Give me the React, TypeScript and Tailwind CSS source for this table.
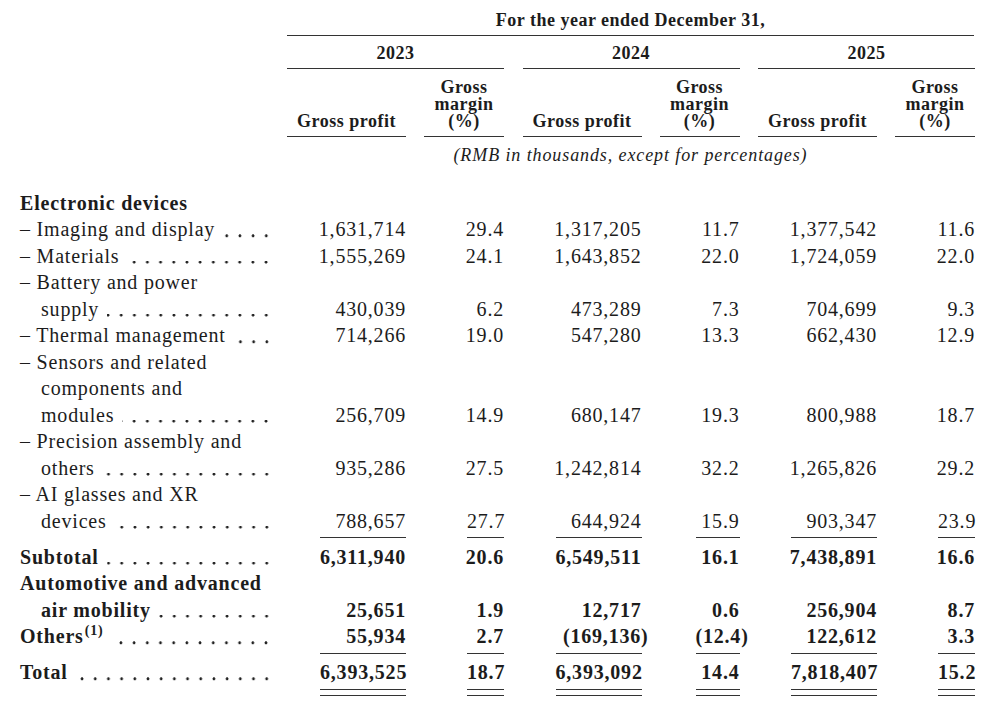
import React from "react";

type Row = {
  label: string;
  dash?: boolean;
  indent?: boolean;
  bold?: boolean;
  dots?: boolean;
  sup?: string;
  values?: string[];
  rule?: "single" | "double";
};

const rows: Row[] = [
  { label: "Electronic devices", bold: true },
  { label: "Imaging and display", dash: true, dots: true, values: ["1,631,714", "29.4", "1,317,205", "11.7", "1,377,542", "11.6"] },
  { label: "Materials", dash: true, dots: true, values: ["1,555,269", "24.1", "1,643,852", "22.0", "1,724,059", "22.0"] },
  { label: "Battery and power", dash: true },
  { label: "supply", indent: true, dots: true, values: ["430,039", "6.2", "473,289", "7.3", "704,699", "9.3"] },
  { label: "Thermal management", dash: true, dots: true, values: ["714,266", "19.0", "547,280", "13.3", "662,430", "12.9"] },
  { label: "Sensors and related", dash: true },
  { label: "components and", indent: true },
  { label: "modules", indent: true, dots: true, values: ["256,709", "14.9", "680,147", "19.3", "800,988", "18.7"] },
  { label: "Precision assembly and", dash: true },
  { label: "others", indent: true, dots: true, values: ["935,286", "27.5", "1,242,814", "32.2", "1,265,826", "29.2"] },
  { label: "AI glasses and XR", dash: true },
  { label: "devices", indent: true, dots: true, rule: "single", values: ["788,657", "27.7", "644,924", "15.9", "903,347", "23.9"] },
  { label: "Subtotal", bold: true, dots: true, values: ["6,311,940", "20.6", "6,549,511", "16.1", "7,438,891", "16.6"] },
  { label: "Automotive and advanced", bold: true },
  { label: "air mobility", bold: true, indent: true, dots: true, values: ["25,651", "1.9", "12,717", "0.6", "256,904", "8.7"] },
  { label: "Others", sup: "(1)", bold: true, dots: true, rule: "single", values: ["55,934", "2.7", "(169,136)", "(12.4)", "122,612", "3.3"] },
  { label: "Total", bold: true, dots: true, rule: "double", values: ["6,393,525", "18.7", "6,393,092", "14.4", "7,818,407", "15.2"] },
];

// underline widths per value column
const ruleWidths = ["w-[86px]", "w-[37px]", "w-[86px]", "w-[44px]", "w-[86px]", "w-[37px]"];
const colWidths = ["w-[119px]", "w-[80px] ml-[18px]", "w-[119px] ml-[18.5px]", "w-[80px] ml-[18px]", "w-[119px] ml-[18.5px]", "w-[80px] ml-[18px]"];

function Value({ text }: { text: string }) {
  if (text.startsWith("(")) return <span className="-mr-[7px]">{text}</span>;
  return <span>{text}</span>;
}

function Cell({ text, idx, rule }: { text: string; idx: number; rule?: "single" | "double" }) {
  const inner = <Value text={text} />;
  let body: React.ReactNode = inner;
  if (rule === "single") {
    body = <div className={`${ruleWidths[idx]} text-right border-b-[1.5px] border-[#333] pb-[3px]`}>{inner}</div>;
  } else if (rule === "double") {
    body = (
      <div className={`${ruleWidths[idx]} border-b-[1.5px] border-[#333]`}>
        <div className="text-right border-b-[1.5px] border-[#333] pb-[3px] mb-[5px]">{inner}</div>
      </div>
    );
  }
  return <div className={`${colWidths[idx]} flex justify-end text-right`}>{body}</div>;
}

function Label({ row }: { row: Row }) {
  return (
    <div className={`w-[287px] shrink-0 pl-[20px] pr-[14px] flex whitespace-nowrap ${row.bold ? "font-bold" : ""}`}>
      <span className={row.indent ? "pl-[21px]" : ""}>
        {row.dash ? "– " : ""}
        {row.label}
        {row.sup && <sup className="text-[14px] font-bold relative -top-[8px] ml-[1px]">{row.sup}</sup>}
      </span>
      {row.dots && (
        <span className="flex-1 ml-[8px] h-[26.5px] bg-[radial-gradient(circle_at_50%_19.5px,#222_1.2px,transparent_1.7px)] bg-[length:13.2px_26.5px] bg-repeat-x bg-[position:right_top]" />
      )}
    </div>
  );
}

export default function App() {
  return (
    <div className="w-[1000px] h-[706px] bg-white text-[#1c1c1c] overflow-hidden" style={{ fontFamily: '"Liberation Serif", "Times New Roman", serif' }}>
      {/* header */}
      <div className="flex font-bold text-[18px] tracking-[0.5px] leading-[20px]">
        <div className="w-[287px] shrink-0" />
        <div className="w-[687px] text-center pt-[10px] pb-[5px] border-b-[1.5px] border-[#333]">For the year ended December 31,</div>
      </div>
      <div className="flex font-bold text-[18px] tracking-[0.5px] leading-[20px]">
        <div className="w-[287px] shrink-0" />
        {["2023", "2024", "2025"].map((y, i) => (
          <div key={y} className={`w-[217px] text-center pt-[7px] pb-[4.5px] border-b-[1.5px] border-[#333] ${i > 0 ? "ml-[18.5px]" : ""}`}>{y}</div>
        ))}
      </div>
      <div className="flex font-bold text-[18px] tracking-[0.5px] leading-[17px]">
        <div className="w-[287px] shrink-0" />
        {[0, 1, 2].map((i) => (
          <div key={i} className={`flex items-end ${i > 0 ? "ml-[18.5px]" : ""}`}>
            <div className="w-[119px] text-center pt-[9px] pb-[6px] border-b-[1.5px] border-[#333]">Gross profit</div>
            <div className="w-[80px] ml-[18px] text-center pt-[10px] pb-[6px] border-b-[1.5px] border-[#333]">
              Gross<br />margin<br />(%)
            </div>
          </div>
        ))}
      </div>
      <div className="flex italic text-[18px] tracking-[0.9px] leading-[20px]">
        <div className="w-[287px] shrink-0" />
        <div className="w-[687px] text-center pt-[8px]">(RMB in thousands, except for percentages)</div>
      </div>

      {/* body */}
      <div className="mt-[25.25px] text-[20px] tracking-[0.8px] leading-[26.5px]">
        {rows.map((row, r) => (
          <div key={r} className={`flex items-start ${row.rule ? "mb-[5.5px]" : ""}`}>
            <Label row={row} />
            {row.values && (
              <div className={`flex ${row.bold ? "font-bold" : ""}`}>
                {row.values.map((v, i) => (
                  <Cell key={i} text={v} idx={i} rule={row.rule} />
                ))}
              </div>
            )}
          </div>
        ))}
      </div>
    </div>
  );
}
